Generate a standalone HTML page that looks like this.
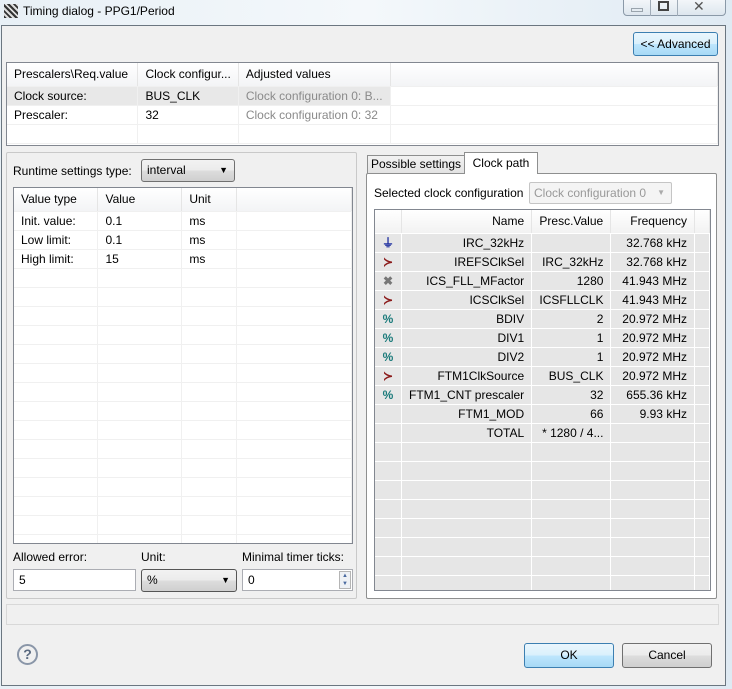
<!DOCTYPE html><html><head><style>
*{box-sizing:border-box;margin:0;padding:0}
body{width:732px;height:689px;position:relative;overflow:hidden;font-family:"Liberation Sans",sans-serif;font-size:12px;color:#000;background:linear-gradient(90deg,#e8f0f6,#f4f8fb 50%,#dfeaf3)}
.a{position:absolute}
.client{left:1px;top:25px;width:725px;height:661px;background:#f0f0f0;border:1px solid #6b7680}
.btn{border:1px solid #707070;border-radius:3px;background:linear-gradient(#f2f2f2,#ebebeb 50%,#dddddd 51%,#cfcfcf);text-align:center;line-height:22px}
.bbtn{border:1px solid #3c7fb1;border-radius:3px;background:linear-gradient(#eaf6fd,#d9f0fc 50%,#bee6fd 51%,#a7d9f5);text-align:center;line-height:22px}
table{border-collapse:collapse;table-layout:fixed}
td{height:19px;padding:0 7px;white-space:nowrap;overflow:hidden;border-right:1px solid #f0f0f0;border-bottom:1px solid #f0f0f0}
.hd td{height:23px;background:linear-gradient(#fff,#f3f4f6);border-right:1px solid #e5e5e5}
.ct td{background:#e6e6e6;border-right:1px solid #fff;border-bottom:1px solid #fff;text-align:right}
.ct .hd td{background:linear-gradient(#fff,#f2f2f2);border-right:1px solid #e5e5e5}
.grp{border:1px solid #c9c9c9;border-radius:2px}
.inp{background:#fff;border:1px solid #abadb3;padding-left:5px;line-height:20px}
</style></head><body>
<div class="a" style="left:4px;top:4px;width:14px;height:14px;background:repeating-linear-gradient(45deg,#333 0 2px,#ddd 2px 4px);transform:rotate(0deg)"></div>
<div class="a" style="left:23px;top:4px;font-size:12px">Timing dialog - PPG1/Period</div>
<div class="a" style="left:623px;top:-2px;width:103px;height:18px;border:1px solid #8a99a8;border-radius:0 0 4px 4px;background:linear-gradient(#f4f7fa,#dde6ee)"></div>
<div class="a" style="left:650px;top:-2px;width:28px;height:18px;border-left:1px solid #a0acb8;border-right:1px solid #a0acb8"></div>
<div class="a" style="left:631px;top:8px;width:12px;height:4px;border:1px solid #9aa4ad"></div>
<div class="a" style="left:658px;top:1px;width:11px;height:10px;border:2px solid #444"></div>
<div class="a" style="left:693px;top:-2px;font-size:14px;color:#555">✕</div>
<div class="a client"></div>
<div class="a bbtn" style="left:633px;top:32px;width:85px;height:24px">&lt;&lt; Advanced</div>
<div class="a" style="left:6px;top:62px;width:713px;height:84px;background:#fff;border:1px solid #828790">
<table><tr class="hd"><td style="width:131px">Prescalers\Req.value</td><td style="width:100px">Clock configur...</td><td style="width:150px">Adjusted values</td><td style="width:330px"></td></tr>
<tr><td style="background:#e8e8e8">Clock source:</td><td style="background:#e8e8e8">BUS_CLK</td><td style="background:#e8e8e8;color:#8a8a8a">Clock configuration 0: B...</td><td></td></tr>
<tr><td>Prescaler:</td><td>32</td><td style="color:#8a8a8a">Clock configuration 0: 32</td><td></td></tr>
<tr><td></td><td></td><td></td><td></td></tr></table></div>
<div class="a grp" style="left:6px;top:152px;width:351px;height:447px"></div>
<div class="a" style="left:13px;top:164px">Runtime settings type:</div>
<div class="a btn" style="left:141px;top:159px;width:94px;height:23px;text-align:left;padding-left:5px;line-height:21px">interval<span style="position:absolute;right:6px;font-size:9px">▼</span></div>
<div class="a" style="left:13px;top:187px;width:340px;height:357px;background:#fff;border:1px solid #828790;overflow:hidden">
<table><tr class="hd"><td style="width:84px">Value type</td><td style="width:84px">Value</td><td style="width:55px">Unit</td><td style="width:115px"></td></tr>
<tr><td>Init. value:</td><td>0.1</td><td>ms</td><td></td></tr>
<tr><td>Low limit:</td><td>0.1</td><td>ms</td><td></td></tr>
<tr><td>High limit:</td><td>15</td><td>ms</td><td></td></tr>
<tr><td></td><td></td><td></td><td></td></tr><tr><td></td><td></td><td></td><td></td></tr><tr><td></td><td></td><td></td><td></td></tr><tr><td></td><td></td><td></td><td></td></tr><tr><td></td><td></td><td></td><td></td></tr><tr><td></td><td></td><td></td><td></td></tr><tr><td></td><td></td><td></td><td></td></tr><tr><td></td><td></td><td></td><td></td></tr><tr><td></td><td></td><td></td><td></td></tr><tr><td></td><td></td><td></td><td></td></tr><tr><td></td><td></td><td></td><td></td></tr><tr><td></td><td></td><td></td><td></td></tr><tr><td></td><td></td><td></td><td></td></tr><tr><td></td><td></td><td></td><td></td></tr><tr><td></td><td></td><td></td><td></td></tr></table></div>
<div class="a" style="left:13px;top:550px">Allowed error:</div>
<div class="a" style="left:141px;top:550px">Unit:</div>
<div class="a" style="left:242px;top:550px">Minimal timer ticks:</div>
<div class="a inp" style="left:13px;top:569px;width:123px;height:22px">5</div>
<div class="a btn" style="left:141px;top:569px;width:96px;height:23px;text-align:left;padding-left:5px;line-height:21px;border-color:#555">%<span style="position:absolute;right:6px;font-size:9px">▼</span></div>
<div class="a inp" style="left:242px;top:569px;width:111px;height:22px">0<div class="a" style="right:1px;top:1px;width:12px;height:18px;border:1px solid #b5b5b5;background:#eef1f5;font-size:6px;line-height:8px;text-align:center;color:#4a6aa0;padding:0">▲<br>▼</div></div>
<div class="a grp" style="left:366px;top:173px;width:351px;height:426px;background:#fff;border-color:#8e8f8f"></div>
<div class="a" style="left:367px;top:155px;width:98px;height:19px;border:1px solid #8e8f8f;background:linear-gradient(#f2f2f2,#e3e3e3);text-align:center;line-height:17px">Possible settings</div>
<div class="a" style="left:464px;top:152px;width:74px;height:22px;border:1px solid #8e8f8f;border-bottom:none;background:#fff;text-align:center;line-height:20px">Clock path</div>
<div class="a" style="left:374px;top:186px">Selected clock configuration</div>
<div class="a" style="left:529px;top:182px;width:143px;height:22px;border:1px solid #c5c5c5;border-radius:2px;background:#f4f4f4;color:#999;padding-left:4px;line-height:20px">Clock configuration 0<span style="position:absolute;right:6px;font-size:8px;color:#aaa">▼</span></div>
<div class="a ct" style="left:374px;top:209px;width:337px;height:382px;background:#e6e6e6;border:1px solid #828790;overflow:hidden">
<table><tr class="hd"><td style="width:25px"></td><td style="width:130px">Name</td><td style="width:80px;text-align:center">Presc.Value</td><td style="width:93px">Frequency</td><td style="width:8px"></td></tr>
<tr><td style="text-align:center;color:#2030a0;font-weight:bold">⏚</td><td>IRC_32kHz</td><td></td><td>32.768 kHz</td><td></td></tr>
<tr><td style="text-align:center;color:#8b1a1a;font-weight:bold">≻</td><td>IREFSClkSel</td><td>IRC_32kHz</td><td>32.768 kHz</td><td></td></tr>
<tr><td style="text-align:center;color:#777;font-weight:bold">✖</td><td>ICS_FLL_MFactor</td><td>1280</td><td>41.943 MHz</td><td></td></tr>
<tr><td style="text-align:center;color:#8b1a1a;font-weight:bold">≻</td><td>ICSClkSel</td><td>ICSFLLCLK</td><td>41.943 MHz</td><td></td></tr>
<tr><td style="text-align:center;color:#1a7a7a;font-weight:bold">%</td><td>BDIV</td><td>2</td><td>20.972 MHz</td><td></td></tr>
<tr><td style="text-align:center;color:#1a7a7a;font-weight:bold">%</td><td>DIV1</td><td>1</td><td>20.972 MHz</td><td></td></tr>
<tr><td style="text-align:center;color:#1a7a7a;font-weight:bold">%</td><td>DIV2</td><td>1</td><td>20.972 MHz</td><td></td></tr>
<tr><td style="text-align:center;color:#8b1a1a;font-weight:bold">≻</td><td>FTM1ClkSource</td><td>BUS_CLK</td><td>20.972 MHz</td><td></td></tr>
<tr><td style="text-align:center;color:#1a7a7a;font-weight:bold">%</td><td>FTM1_CNT prescaler</td><td>32</td><td>655.36 kHz</td><td></td></tr>
<tr><td></td><td>FTM1_MOD</td><td>66</td><td>9.93 kHz</td><td></td></tr>
<tr><td></td><td>TOTAL</td><td>* 1280 / 4...</td><td></td><td></td></tr>
<tr><td></td><td></td><td></td><td></td><td></td></tr><tr><td></td><td></td><td></td><td></td><td></td></tr><tr><td></td><td></td><td></td><td></td><td></td></tr><tr><td></td><td></td><td></td><td></td><td></td></tr><tr><td></td><td></td><td></td><td></td><td></td></tr><tr><td></td><td></td><td></td><td></td><td></td></tr><tr><td></td><td></td><td></td><td></td><td></td></tr><tr><td></td><td></td><td></td><td></td><td></td></tr></table></div>
<div class="a" style="left:6px;top:604px;width:713px;height:21px;border:1px solid #d8d8d8;background:#f0f0f0"></div>
<div class="a" style="left:17px;top:644px;width:21px;height:21px;border:2px solid #8a96a8;border-radius:50%;text-align:center;line-height:17px;font-weight:bold;color:#5a6a80;font-size:14px">?</div>
<div class="a bbtn" style="left:524px;top:643px;width:90px;height:25px">OK</div>
<div class="a btn" style="left:622px;top:643px;width:90px;height:25px">Cancel</div>
</body></html>
